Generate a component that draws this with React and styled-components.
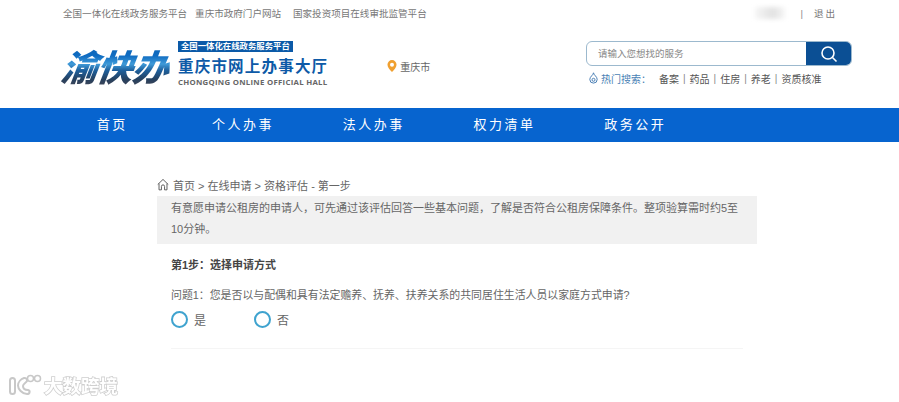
import React from "react";
import styled, { createGlobalStyle } from "styled-components";

const Global = createGlobalStyle`
  html, body { margin: 0; padding: 0; background: #fff; }
  body { font-family: "Liberation Sans", "Noto Sans CJK SC", sans-serif; color: #555; }
  * { box-sizing: border-box; }
`;

const Page = styled.div`
  position: relative;
  width: 899px;
  height: 402px;
  overflow: hidden;
  background: #fff;
`;

const TopBar = styled.div`
  display: flex;
  align-items: center;
  height: 26px;
  padding: 0 62px 0 63px;
  font-size: 9.55px;
  color: #777;
`;
const TopLink = styled.span`
  margin-right: ${(p) => p.$gap}px;
`;
const TopRight = styled.div`
  margin-left: auto;
  display: flex;
  align-items: center;
`;
const BlurredName = styled.span`
  width: 30px;
  height: 12px;
  margin-right: 15px;
  background: linear-gradient(90deg, #f6f6f6, #e2e2e2 60%, #f6f6f6);
  filter: blur(2px);
`;
const Logout = styled.span`
  margin-left: 11px;
  letter-spacing: 2px;
  color: #777;
`;
const Sep = styled.span`
  color: #888;
`;

const Header = styled.div`
  display: flex;
  height: 82px;
  padding: 12px 47px 0 62px;
`;
const Logo = styled.div`
  width: 116px;
  height: 46px;
  margin-top: 4px;
  font: italic 900 36px/46px "Noto Sans CJK SC", sans-serif;
  letter-spacing: -0.5px;
  white-space: nowrap;
  transform: skewX(-8deg);
  background:
    linear-gradient(180deg, #0b5fb0 0%, #0f6cc2 30%, #3f9ad8 48%, #1d5f9c 62%, #26405e 82%, #4a4a58 100%);
  -webkit-background-clip: text;
  background-clip: text;
  color: transparent;
`;
const Brand = styled.div`
  display: flex;
  flex-direction: column;
  align-items: flex-start;
  margin-top: 3px;
`;
const BrandTag = styled.div`
  background: #0b5aa8;
  color: #fff;
  font-size: 8.4px;
  font-weight: 700;
  line-height: 11px;
  padding: 0 3px;
  white-space: nowrap;
`;
const BrandTitle = styled.div`
  margin-top: 2px;
  color: #0d5aa7;
  font: 700 15.5px/23px "Noto Sans CJK SC", sans-serif;
  letter-spacing: 1.2px;
  white-space: nowrap;
`;
const BrandEn = styled.div`
  color: #666;
  font: 700 7.8px/11px "Open Sans", sans-serif;
  letter-spacing: 0.28px;
  white-space: nowrap;
`;
const City = styled.div`
  display: flex;
  align-items: center;
  gap: 3px;
  margin: 20px 0 0 59px;
  height: 16px;
  font-size: 10px;
  color: #666;
`;
const SearchCol = styled.div`
  margin-left: auto;
  width: 266px;
  margin-top: 3px;
`;
const SearchBox = styled.div`
  display: flex;
  height: 25px;
  border: 1px solid #9cb9ce;
  border-radius: 6px;
  overflow: hidden;
`;
const SearchInput = styled.div`
  flex: 1;
  padding-left: 11px;
  font-size: 9.5px;
  line-height: 23px;
  color: #888;
`;
const SearchButton = styled.div`
  width: 45px;
  background: #0b4f94;
  display: flex;
  align-items: center;
  justify-content: center;
`;
const Hot = styled.div`
  display: flex;
  align-items: center;
  height: 14px;
  margin-top: 5px;
  padding-left: 3px;
  font-size: 10px;
  color: #555;
`;
const HotLabel = styled.span`
  margin: 0 8px 0 3px;
  color: #4a7fb5;
`;
const HotSep = styled.span`
  margin: 0 4px;
  color: #888;
`;

const Nav = styled.nav`
  display: flex;
  height: 34px;
  padding-left: 46px;
  background: #0764cf;
`;
const NavItem = styled.div`
  width: 130.75px;
  padding-left: 2px;
  text-align: center;
  color: #fff;
  font-size: 13px;
  line-height: 34px;
  letter-spacing: 2.5px;
`;

const Content = styled.main`
  width: 600px;
  margin: 0 0 0 157px;
  padding-top: 32px;
`;
const Crumb = styled.div`
  display: flex;
  align-items: center;
  height: 21px;
  margin-bottom: 1px;
  font-size: 11px;
  color: #666;
`;
const CrumbIcon = styled.svg`
  margin-right: 4px;
`;
const Notice = styled.div`
  background: #f1f1f1;
  padding: 2px 14px 0;
  font-size: 11px;
  line-height: 21px;
  height: 48px;
  color: #666;
`;
const StepTitle = styled.h3`
  margin: 13px 0 0;
  padding-left: 14px;
  font-size: 11px;
  font-weight: 700;
  line-height: 16px;
  color: #444;
`;
const Question = styled.p`
  margin: 14px 0 0;
  padding-left: 14px;
  font-size: 10.9px;
  line-height: 16px;
  color: #666;
`;
const Options = styled.div`
  display: flex;
  align-items: center;
  height: 24px;
  margin: 4px 14px 0;
`;
const Option = styled.label`
  display: flex;
  align-items: center;
  width: 83px;
  font-size: 12px;
  color: #666;
`;
const Radio = styled.span`
  width: 17px;
  height: 17px;
  margin-right: 6px;
  border: 2px solid #3fa3cf;
  border-radius: 50%;
`;
const Divider = styled.div`
  height: 1px;
  margin: 17px 14px 0;
  background: #f5f5f5;
`;

const Watermark = styled.div`
  position: absolute;
  left: 8px;
  top: 373px;
  display: flex;
  align-items: center;
  gap: 2px;
  filter: blur(0.4px);
`;
const WatermarkText = styled.span`
  font: 700 18.5px/24px "Noto Sans CJK SC", sans-serif;
  color: #fff;
  -webkit-text-stroke: 1.6px #cfcfcf;
  paint-order: stroke fill;
  white-space: nowrap;
`;

export default function App() {
  return (
    <Page>
      <Global />
      <TopBar>
        <TopLink $gap={8}>全国一体化在线政务服务平台</TopLink>
        <TopLink $gap={12}>重庆市政府门户网站</TopLink>
        <TopLink $gap={0}>国家投资项目在线审批监管平台</TopLink>
        <TopRight>
          <BlurredName />
          <Sep>|</Sep>
          <Logout>退出</Logout>
        </TopRight>
      </TopBar>
      <Header>
        <Logo>渝快办</Logo>
        <Brand>
          <BrandTag>全国一体化在线政务服务平台</BrandTag>
          <BrandTitle>重庆市网上办事大厅</BrandTitle>
          <BrandEn>CHONGQING ONLINE OFFICIAL HALL</BrandEn>
        </Brand>
        <City>
          <svg width="10" height="14" viewBox="0 0 11 14">
            <path d="M5.5 0.5a5 5 0 0 1 5 5c0 3-3 6-5 8-2-2-5-5-5-8a5 5 0 0 1 5-5z" fill="#f0a030" />
            <circle cx="5.5" cy="5.5" r="2.2" fill="#fff" />
          </svg>
          重庆市
        </City>
        <SearchCol>
          <SearchBox>
            <SearchInput>请输入您想找的服务</SearchInput>
            <SearchButton>
              <svg width="18" height="18" viewBox="0 0 18 18" fill="none" stroke="#fff" strokeWidth="1.6">
                <circle cx="8" cy="8" r="6" />
                <path d="M12.5 12.5L16.5 16.5" />
              </svg>
            </SearchButton>
          </SearchBox>
          <Hot>
            <svg width="9" height="12" viewBox="0 0 9 12" fill="none" stroke="#4a7fb5" strokeWidth="1">
              <path d="M4.5 0.8c0 2-3.7 3.8-3.7 6.6a3.7 3.7 0 0 0 7.4 0c0-2.8-3.7-4.6-3.7-6.6z" />
              <circle cx="4.5" cy="7.8" r="1.5" />
            </svg>
            <HotLabel>热门搜索：</HotLabel>
            备案<HotSep>|</HotSep>药品<HotSep>|</HotSep>住房<HotSep>|</HotSep>养老<HotSep>|</HotSep>资质核准
          </Hot>
        </SearchCol>
      </Header>
      <Nav>
        {["首页", "个人办事", "法人办事", "权力清单", "政务公开"].map((n) => (
          <NavItem key={n}>{n}</NavItem>
        ))}
      </Nav>
      <Content>
        <Crumb>
          <CrumbIcon width="12" height="13" viewBox="0 0 13 13" fill="none" stroke="#555" strokeWidth="1">
            <path d="M0.8 6.5L6.5 1l5.7 5.5M2.2 5.5v6.8h2.6V8.6a1.7 1.7 0 0 1 3.4 0v3.7h2.6V5.5" />
          </CrumbIcon>
          首页 &gt; 在线申请 &gt; 资格评估 - 第一步
        </Crumb>
        <Notice>
          有意愿申请公租房的申请人，可先通过该评估回答一些基本问题，了解是否符合公租房保障条件。整项验算需时约5至10分钟。
        </Notice>
        <StepTitle>第1步：选择申请方式</StepTitle>
        <Question>问题1：您是否以与配偶和具有法定赡养、抚养、扶养关系的共同居住生活人员以家庭方式申请?</Question>
        <Options>
          <Option><Radio />是</Option>
          <Option><Radio />否</Option>
        </Options>
        <Divider />
      </Content>
      <Watermark>
        <svg width="34" height="24" viewBox="0 0 34 24" fill="#fff" stroke="#c8c8c8" strokeWidth="2">
          <rect x="2" y="5" width="5" height="16" rx="2.5" />
          <path d="M16 5c-3 1-6 4-6 7.5S14 21 19 21c3 0 3.5-3.5 1-4-3 0-5-1.5-5-4s3-3 4-5c.5-2-1.500-3.500-3-3z" />
          <circle cx="22.5" cy="5.5" r="3" strokeWidth="1.5" />
          <circle cx="29.5" cy="5.5" r="3" strokeWidth="1.5" />
        </svg>
        <WatermarkText>大数跨境</WatermarkText>
      </Watermark>
    </Page>
  );
}
